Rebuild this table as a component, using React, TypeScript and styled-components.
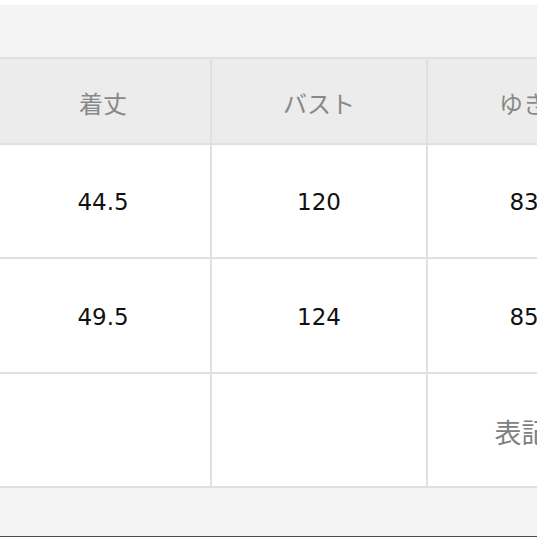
import React from 'react';
import styled, {createGlobalStyle} from 'styled-components';

const GlobalStyle = createGlobalStyle`
  html, body {
    margin: 0;
    padding: 0;
    background: #ffffff;
    overflow: hidden;
  }
`;

const headers = ['着丈', 'バスト', 'ゆき丈'];
const rows = [
  ['44.5', '120', '83.5'],
  ['49.5', '124', '85.5'],
];

const App = () => {
  return (
    <>
      <GlobalStyle/>
      <Page>
        <Panel>
          <SizeTable>
            {headers.map((h) => (
              <HeadCell key={h}>{h}</HeadCell>
            ))}
            {rows.map((row, idx) => (
              row.map((v, i) => (
                <ValueCell key={`${idx}-${i}`}>{v}</ValueCell>
              ))
            ))}
            <NoteCell/>
            <NoteCell/>
            <NoteCell $muted>表記無</NoteCell>
          </SizeTable>
        </Panel>
      </Page>
    </>
  )
}

export default App;

const Page = styled.div`
  width: 537px;
  height: 537px;
  padding-top: 5px;
  box-sizing: border-box;
  overflow: hidden;
`;
const Panel = styled.div`
  height: 532px;
  box-sizing: border-box;
  background: #f4f3f4;
  padding-top: 52px;
  border-bottom: 1px solid #4a4a4a;
`;
const SizeTable = styled.div`
  display: grid;
  grid-template-columns: repeat(3, 214px);
  grid-template-rows: 84px 112px 113px 112px;
  gap: 2px;
  padding: 2px 0;
  margin-left: -4px;
  width: max-content;
  background: #e0e0e0;
`;
const Cell = styled.div`
  display: flex;
  align-items: center;
  justify-content: center;
  font-family: "Noto Sans CJK JP", "DejaVu Sans", sans-serif;
`;
const HeadCell = styled(Cell)`
  background: #ececec;
  color: #888888;
  font-size: 24px;
  padding-top: 2px;
`;
const ValueCell = styled(Cell)`
  background: #ffffff;
  color: #111111;
  font-family: "DejaVu Sans", sans-serif;
  font-size: 23px;
  padding-top: 2px;
`;
const NoteCell = styled(Cell)<{$muted?: boolean}>`
  background: #ffffff;
  color: ${(p) => (p.$muted ? '#808080' : '#111111')};
  font-size: 27px;
  padding-top: 2px;
`;
